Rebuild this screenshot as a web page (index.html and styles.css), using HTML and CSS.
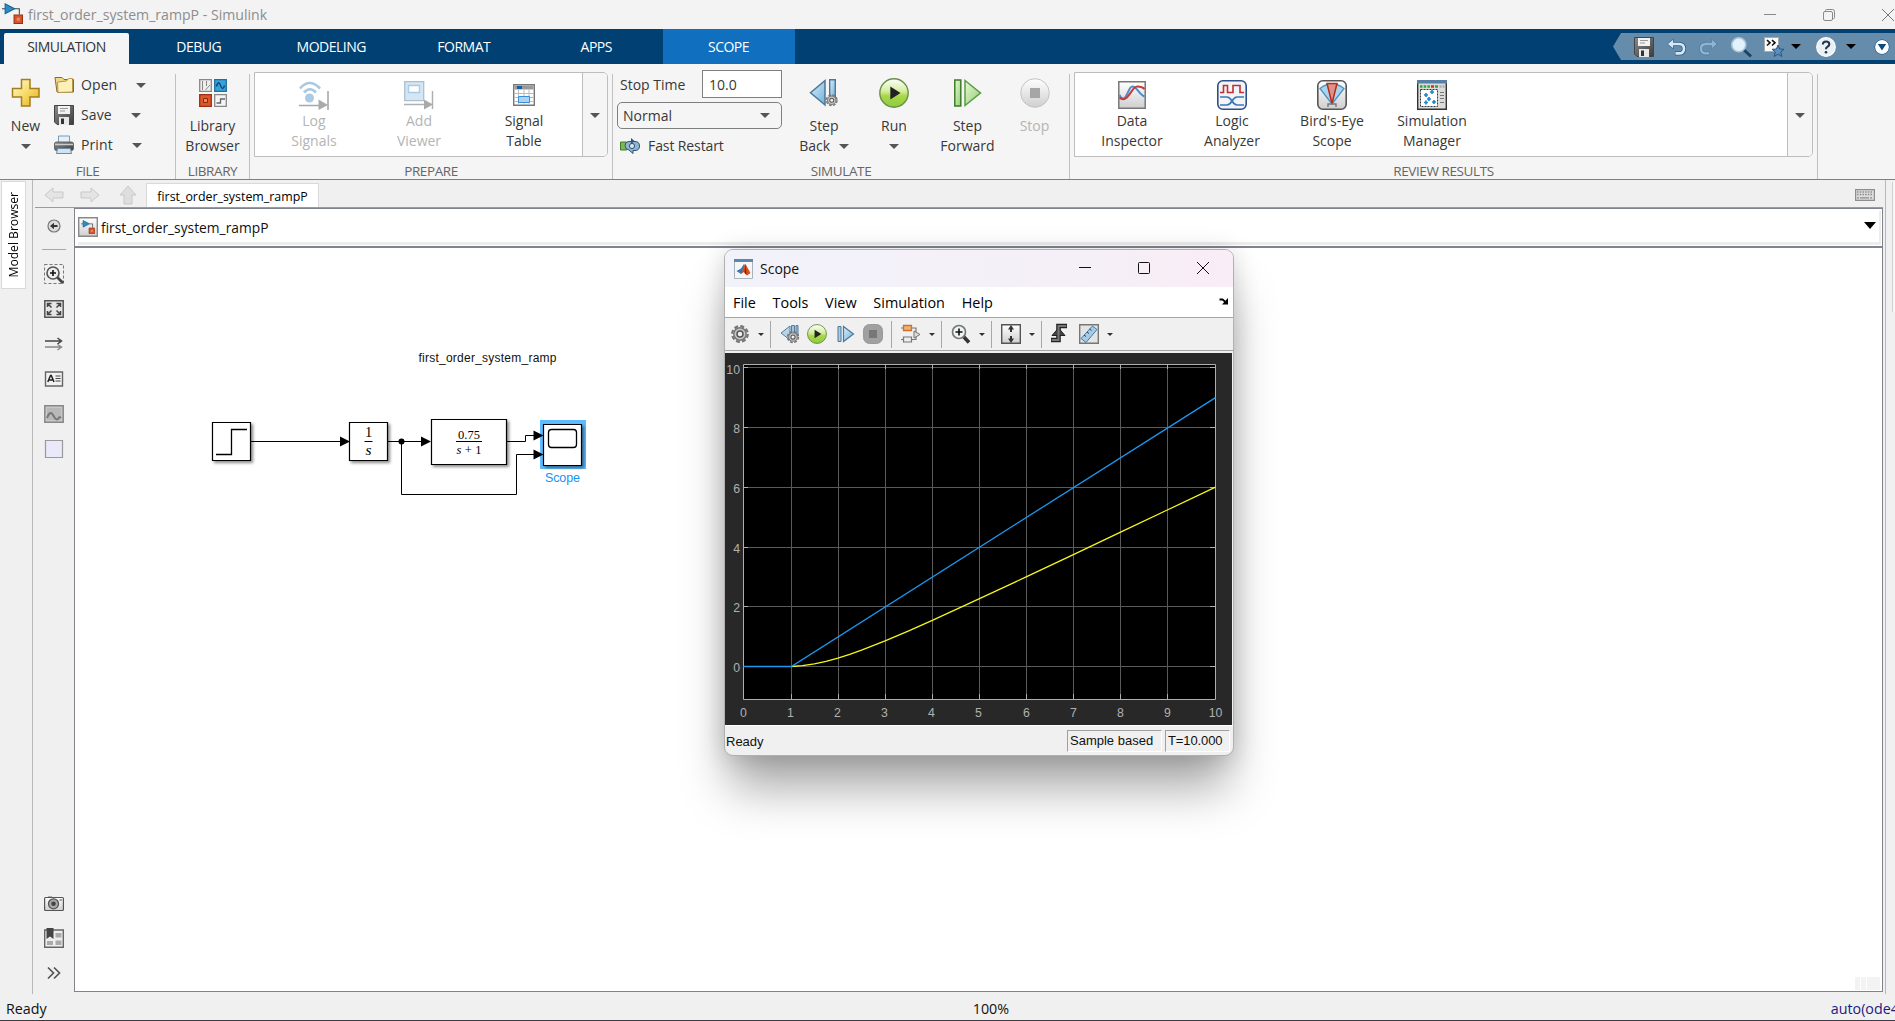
FILE: index.html
```html
<!DOCTYPE html>
<html lang="en">
<head>
<meta charset="utf-8">
<title>first_order_system_rampP - Simulink</title>
<link rel="stylesheet" href="styles.css">
</head>
<body>
<svg class="defs" width="0" height="0" aria-hidden="true">
  <defs>
    <linearGradient id="gGold" x1="0" y1="0" x2="1" y2="1"><stop offset="0" stop-color="#fffbd8"/><stop offset=".5" stop-color="#f7dc6a"/><stop offset="1" stop-color="#e3ae1c"/></linearGradient>
    <linearGradient id="gGreen" x1="0" y1="0" x2="0" y2="1"><stop offset="0" stop-color="#ffffff"/><stop offset=".45" stop-color="#d3ec9a"/><stop offset=".6" stop-color="#a8d84a"/><stop offset="1" stop-color="#8ecb3c"/></linearGradient>
    <linearGradient id="gGreenFlat" x1="0" y1="0" x2="1" y2="1"><stop offset="0" stop-color="#e8f8d8"/><stop offset="1" stop-color="#8fcf6c"/></linearGradient>
    <linearGradient id="gBlue" x1="0" y1="0" x2="1" y2="1"><stop offset="0" stop-color="#dceefa"/><stop offset="1" stop-color="#6fb0dc"/></linearGradient>
    <linearGradient id="gGrey" x1="0" y1="0" x2="0" y2="1"><stop offset="0" stop-color="#ffffff"/><stop offset="1" stop-color="#cfcfcf"/></linearGradient>
    <linearGradient id="gDark" x1="0" y1="0" x2="1" y2="1"><stop offset="0" stop-color="#8c8c8c"/><stop offset="1" stop-color="#3c3c3c"/></linearGradient>
    <symbol id="caret" viewBox="0 0 10 5"><path d="M0 0h10L5 5z" fill="currentColor"/></symbol>
    <symbol id="save" viewBox="0 0 20 20">
      <path d="M.5.5h19v19H3L.5 17z" fill="url(#gDark)" stroke="#444"/>
      <path d="M4 1h12v8H4z" fill="#f2f2f2"/><path d="M6 3.5h8M6 6h5" stroke="#999" stroke-width="1.2"/>
      <path d="M5 12h10v8H5z" fill="#e8e8e8"/><path d="M7 13.5h3V19H7z" fill="#333"/>
    </symbol>
    <symbol id="gear" viewBox="0 0 20 20">
      <circle cx="10" cy="10" r="7.800" fill="none" stroke="#777" stroke-width="2.200" stroke-dasharray="4 2.130"/>
      <circle cx="10" cy="10" r="6.200" fill="#c8c8c8" stroke="#777" stroke-width="1.500"/><circle cx="10" cy="10" r="3" fill="#f0f0f0" stroke="#555" stroke-width="1.500"/>
    </symbol>
    <symbol id="run" viewBox="0 0 30 30">
      <circle cx="15" cy="15" r="14.2" fill="url(#gGreen)" stroke="#6a8f4a" stroke-width="1.4"/>
      <path d="M11.3 8.5 21.5 15l-10.2 6.5z" fill="#222"/>
    </symbol>
    <symbol id="model" viewBox="0 0 20 20">
      <path d="M12 5.5h4.5V11" fill="none" stroke="#444"/>
      <path d="M0 5.5h3" stroke="#444"/>
      <path d="M3 .8v9.4l9-4.7z" fill="#2b8ccc" stroke="#1b5d8c"/>
      <path d="M11.5 11.500h8v8h-8z" fill="#d9532c" stroke="#99300f"/><path d="M14 14h3v3h-3z" fill="#e98a5c"/>
    </symbol>
  </defs>
</svg>

<header class="titlebar">
  <svg class="app-icon" width="21" height="21"><use href="#model"/></svg>
  <span class="title">first_order_system_rampP - Simulink</span>
  <div class="win-buttons">
    <svg width="12" height="12"><path d="M0 5.500h12" stroke="#888"/></svg>
    <svg width="12" height="12" fill="none" stroke="#888"><rect x=".5" y="2.5" width="9" height="9" rx="1.500"/><path d="M2.500 2.500V1.500q0-1 1-1h6q2 0 2 2v6q0 1-1 1h-1"/></svg>
    <svg width="12" height="12" stroke="#777"><path d="M0 0 12 12M12 0 0 12"/></svg>
  </div>
</header>

<nav class="tabs">
  <div class="tab active">SIMULATION</div>
  <div class="tab">DEBUG</div>
  <div class="tab">MODELING</div>
  <div class="tab">FORMAT</div>
  <div class="tab">APPS</div>
  <div class="tab context">SCOPE</div>
  <div class="quick">
    <svg width="20" height="20"><use href="#save"/></svg>
    <svg class="q-undo" width="19" height="16" fill="none"><path d="M4 5h8q5 0 5 4.700t-5 4.700H8" stroke="#2d5f8a" stroke-width="4.200"/><path d="M6.500 0 .300 5l6.200 5z" fill="#d4e8f7" stroke="#2d5f8a" stroke-width=".8"/><path d="M4 5h8q5 0 5 4.700t-5 4.700H8.500" stroke="#d4e8f7" stroke-width="2.600"/></svg>
    <svg class="q-redo" width="19" height="16" fill="none"><path d="M15 5H7q-5 0-5 4.700t5 4.700h3.500" stroke="#4d7fa8" stroke-width="4"/><path d="M12.500 0l5.700 5-5.700 5z" fill="#8fb4d2" stroke="#4d7fa8" stroke-width=".8"/><path d="M15 5H7q-5 0-5 4.700t5 4.700h3" stroke="#8fb4d2" stroke-width="2.400"/></svg>
    <svg class="q-find" width="21" height="20"><path d="m12 12 8 7.500" stroke="#1c4266" stroke-width="3"/><circle cx="7.800" cy="7.800" r="7" fill="#e3f1fb" stroke="#a9c4da" stroke-width="1.600"/></svg>
    <svg class="q-fav" width="20" height="20"><path d="M.5.500h14v14H.5z" fill="#fafafa" stroke="#aaa"/><path d="m3 3 3 2.800L3 8.500M8 3l3 2.800L8 8.500" fill="none" stroke="#111" stroke-width="1.600"/><path d="m14 8 1.700 4 4.300.3-3.300 2.700 1.100 4.500-3.800-2.400-3.800 2.400 1.100-4.500L8 12.300l4.300-.3z" fill="#5a8fc0" stroke="#24507c" stroke-width=".9"/></svg>
    <svg class="q-caret1" width="10" height="5"><use href="#caret"/></svg>
    <svg class="q-help" width="20" height="20"><circle cx="10" cy="10" r="9.300" fill="#e9f0f6" stroke="#fff" stroke-width="1.200"/><path d="M6.800 7.500q.2-3 3.300-3t3.200 2.700q0 1.500-1.700 2.500T10 12.300" fill="none" stroke="#24364a" stroke-width="2.100"/><circle cx="10" cy="15.200" r="1.300" fill="#24364a"/></svg>
    <svg class="q-caret2" width="10" height="5"><use href="#caret"/></svg>
    <svg class="q-more" width="16" height="16"><circle cx="8" cy="8" r="6" fill="#fff" stroke="#0d4a80" stroke-width="3"/><circle cx="8" cy="8" r="6.200" fill="#fff" stroke="#fff" stroke-width="1.400"/><path d="M3.800 5h8.400L8 11.500z" fill="#0d4a80"/></svg>
  </div>
</nav>

<div class="toolstrip">
  <section class="group file">
    <div class="group-body">
      <div class="big new"><div class="pic"><svg width="30" height="30"><path d="M10.500 1.500h8.500v9h9v8.500h-9v9h-8.500v-9h-9v-8.500h9z" fill="url(#gGold)" stroke="#a67c1c" stroke-width="1.500"/></svg></div><span>New</span><svg class="drop" width="10" height="5"><use href="#caret"/></svg></div>
      <div class="list">
        <div class="row"><svg width="20" height="20"><path d="M1 2.500h7l2 2h9.500V17H3z" fill="#f1d98a" stroke="#8a6a24"/><path d="m3.500 7 9-1 2-2.500h4V17L4 17.500z" fill="#fbf0b8" stroke="#a8832c" stroke-width=".8"/></svg><span>Open</span><svg width="10" height="5"><use href="#caret"/></svg></div>
        <div class="row"><svg width="20" height="20"><use href="#save"/></svg><span>Save</span><svg width="10" height="5"><use href="#caret"/></svg></div>
        <div class="row"><svg width="20" height="20"><path d="M4.500 1h11v7h-11z" fill="#e4f1fa" stroke="#7a9ab5"/><rect x=".5" y="7" width="19" height="8.500" rx="2" fill="url(#gDark)" stroke="#666"/><path d="M1 9.500h18" stroke="#ccc" stroke-width="1.500"/><path d="M3.500 13.500h13l1 5h-15z" fill="#cfe3f2" stroke="#6a8aa5"/></svg><span>Print</span><svg width="10" height="5"><use href="#caret"/></svg></div>
      </div>
    </div>
    <div class="group-label">FILE</div>
  </section>

  <section class="group library">
    <div class="group-body">
      <div class="big"><div class="pic"><svg width="28" height="28"><path d="M.7.700h11.600v11.600H.7z" fill="#eee" stroke="#888" stroke-width="1.300"/><path d="M3.500 2v9M6.500 11l4.500-5M7.500 2v5" fill="none" stroke="#888"/><path d="M15.700.700h11.600v11.600H15.700z" fill="#3aa0dc" stroke="#1f6fa0" stroke-width="1.300"/><path d="M17.500 7.500q1.800-7 4-1t4 0" fill="none" stroke="#0c4870" stroke-width="1.400"/><path d="M.7 15.700h11.600v11.600H.7z" fill="#e0562c" stroke="#9a3010" stroke-width="1.300"/><path d="M4.500 19.500h4v4h-4z" fill="#f08a5c" stroke="#8a2a0c"/><path d="M15.700 15.700h11.600v11.600H15.700z" fill="#f4f4f4" stroke="#888" stroke-width="1.300"/><path d="M17.500 24h4v-4h4.500" fill="none" stroke="#666" stroke-width="1.300"/></svg></div><span>Library<br>Browser</span></div>
    </div>
    <div class="group-label">LIBRARY</div>
  </section>

  <section class="group prepare">
    <div class="group-body">
      <div class="gallery">
        <div class="items">
          <div class="item off"><div class="pic"><svg width="30" height="29"><path d="M1 7.500q9.500-11 20 0M5 11.500q6-6.500 12 0" fill="none" stroke="#aac8df" stroke-width="2.600"/><circle cx="10.500" cy="17" r="4.500" fill="#a9cbe5"/><path d="M0 24.500h20M29 10v19" stroke="#a8a8a8" stroke-width="1.600"/><path d="M19.500 18.500 29 24l-9.500 5z" fill="#aaa"/></svg></div><span>Log<br>Signals</span></div>
          <div class="item off"><div class="pic"><svg width="30" height="29"><path d="M.7.700h19v19H.7z" fill="#d5e5f1" stroke="#aac0d2" stroke-width="1.300"/><path d="M4.500 4.500h11v7h-11z" fill="#fff" stroke="#a4cdec" stroke-width="1.400"/><path d="M0 23.500h20M28.500 10v18" stroke="#b0b0b0" stroke-width="1.500"/><path d="M20 18.500 29 23.500l-9 5z" fill="#aaa"/></svg></div><span>Add<br>Viewer</span></div>
          <div class="item"><div class="pic"><svg width="22" height="22"><path d="M.7.700h20.600v20.600H.7z" fill="#fff" stroke="#777" stroke-width="1.400"/><path d="M1.500 1.500h19v4h-19z" fill="#999"/><path d="M4 2h5v3H4z" fill="#1560a8"/><path d="M1 9.500h20M1 13.500h20M1 17.500h20M5.500 6v15M11 6v15M16 6v15" stroke="#bbb" stroke-width="1"/><path d="M5.500 12.500h11v6h-11z" fill="#a8d4f8" stroke="#3c8cd8"/></svg></div><span>Signal<br>Table</span></div>
        </div>
        <div class="more"><svg width="10" height="5"><use href="#caret"/></svg></div>
      </div>
    </div>
    <div class="group-label">PREPARE</div>
  </section>

  <section class="group simulate">
    <div class="group-body">
      <div class="sim-form">
        <div class="stop-time"><span>Stop Time</span><div class="field">10.0</div></div>
        <div class="select"><span>Normal</span><svg width="10" height="5"><use href="#caret"/></svg></div>
        <div class="restart"><svg width="20" height="16"><path d="M.5 4h6v8h-6z" fill="#7cb84c" stroke="#47782a"/><path d="M11 3.500h4q4.500 0 4.500 4.500t-4.500 4.500h-2v3l-4-3.500q-4-.5-4-4.500t4-4z" fill="#90b4d2" stroke="#2f5474"/><path d="m11 0 3.500 3L11 6z" fill="#2f5474"/><circle cx="12" cy="8" r="2.600" fill="#d2e4f2" stroke="#2f5474"/></svg><span>Fast Restart</span></div>
      </div>
      <div class="big step-back"><div class="pic"><svg width="30" height="28"><path d="M16 1.500V26L1.500 13.800z" fill="url(#gBlue)" stroke="#4d7797" stroke-width="1.500"/><path d="M20.700.700h5.600v18h-5.600z" fill="url(#gBlue)" stroke="#4d7797" stroke-width="1.400"/><use href="#gear" x="16" y="14.500" width="13.500" height="13.500"/></svg></div><span>Step<br>Back <svg class="inline-caret" width="10" height="5"><use href="#caret"/></svg></span></div>
      <div class="big run"><div class="pic"><svg width="30" height="30"><use href="#run"/></svg></div><span>Run</span><svg class="drop" width="10" height="5"><use href="#caret"/></svg></div>
      <div class="big step-fwd"><div class="pic"><svg width="28" height="28"><path d="M.8 1h6v26h-6z" fill="url(#gGreenFlat)" stroke="#3f7a2a" stroke-width="1.500"/><path d="M11 1.500V26.500l15.500-12.500z" fill="url(#gGreenFlat)" stroke="#5c9a44" stroke-width="1.500"/></svg></div><span>Step<br>Forward</span></div>
      <div class="big stop off"><div class="pic"><svg width="30" height="30"><circle cx="15" cy="15" r="14.300" fill="url(#gGrey)" stroke="#c4c4c4"/><path d="M10 10h10v10H10z" fill="#a6a6a6"/></svg></div><span>Stop</span></div>
    </div>
    <div class="group-label">SIMULATE</div>
  </section>

  <section class="group review">
    <div class="group-body">
      <div class="gallery">
        <div class="items">
          <div class="item"><div class="pic"><svg width="28" height="28"><path d="M.8.800h26.400v26.400H.8z" fill="url(#gGrey)" stroke="#777" stroke-width="1.500"/><path d="M1.500 14q2 4 4 3.500c4-1 5-12 9-12s7 8 12 10" fill="none" stroke="#4c8ccc" stroke-width="2"/><path d="M1.500 16.500q3 3 6 1c5-3 7-12 12-12q4.500 0 7 2.500" fill="none" stroke="#c83a3a" stroke-width="2"/></svg></div><span>Data<br>Inspector</span></div>
          <div class="item"><div class="pic"><svg width="30" height="30"><rect x=".8" y=".800" width="28.400" height="28.400" rx="5" fill="#f2f4f8" stroke="#2d4f88" stroke-width="1.600"/><path d="M3 12.500h3.500v-7h4v7h5.500v-7h7v7h4" fill="none" stroke="#c03030" stroke-width="1.600"/><path d="M3 17h7c5 0 5 8 10 8h7M3 25h7c5 0 5-8 10-8h7" fill="none" stroke="#3978b8" stroke-width="1.700"/></svg></div><span>Logic<br>Analyzer</span></div>
          <div class="item"><div class="pic"><svg width="30" height="30"><rect x=".8" y=".800" width="28.400" height="28.400" rx="5" fill="url(#gGrey)" stroke="#555" stroke-width="1.600"/><path d="M15 24 3 8.500Q15-1 27 8.500z" fill="#a8d4f0" stroke="#4c94c4" stroke-width="1.300"/><path d="M15 23.500 10 3.500h10z" fill="#dc9488" stroke="#b82c20" stroke-width="1.500"/><path d="M11 27v-3h8v3" fill="none" stroke="#777" stroke-width="1.400"/></svg></div><span>Bird's-Eye<br>Scope</span></div>
          <div class="item"><div class="pic"><svg width="30" height="30"><path d="M.7.700h28.600v28.600H.7z" fill="#dcdcdc" stroke="#333" stroke-width="1.400"/><path d="M0 0h30v3.500H0z" fill="#557fa4"/><path d="M3 6.500h10" stroke="#1fae3c" stroke-width="2.400" stroke-dasharray="2.500 1.200"/><path d="M14 6.500h3" stroke="#e02818" stroke-width="2.400"/><path d="M18 6.500h3" stroke="#1fae3c" stroke-width="2.400"/><path d="M22.500 6.500h5" stroke="#aaa" stroke-width="2.400" stroke-dasharray="2 1"/><path d="M3.500 9.500h17v17h-17z" fill="#fff" stroke="#333" stroke-dasharray="2 1"/><path d="M13 12h4M15 10v4M7 15h4M9 13v4M10 19h4M12 17v4M7 22.500h4M9 20.500v4M15 22h4M17 20v4" stroke="#2288cc" stroke-width="1.700"/><path d="M23 12.500h4M23 15.500h4M23 18.500h4M23 22.500h4" stroke="#777"/></svg></div><span>Simulation<br>Manager</span></div>
        </div>
        <div class="more"><svg width="10" height="5"><use href="#caret"/></svg></div>
      </div>
    </div>
    <div class="group-label">REVIEW RESULTS</div>
  </section>
</div>

<main class="workspace">
  <aside class="left-dock"><div class="dock-tab"><span>Model Browser</span></div></aside>
  <div class="editor">
    <div class="doc-bar">
      <svg class="nav-back" width="20" height="16"><path d="M1 8l8-7v4h10v6H9v4z" fill="#e4e4e4" stroke="#c9c9c9"/></svg>
      <svg class="nav-fwd" width="20" height="16"><path d="M19 8l-8-7v4H1v6h10v4z" fill="#e4e4e4" stroke="#c9c9c9"/></svg>
      <svg class="nav-up" width="18" height="20"><path d="M9 1l8 9h-4v9H5v-9H1z" fill="#dedede" stroke="#c9c9c9"/></svg>
      <div class="doc-tab">first_order_system_rampP</div>
      <svg class="keyboard" width="20" height="12"><path d="M.6.600h18.800v10.800H.6z" fill="#ddd" stroke="#8d8d8d" stroke-width="1.200"/><path d="M2 3h16M2 5.500h16" stroke="#8d8d8d" stroke-width="1.400" stroke-dasharray="1.500 1.200"/><path d="M2 8.800h16" stroke="#8d8d8d" stroke-width="1.300" stroke-dasharray="2 1 9 1"/></svg>
    </div>
    <div class="edit-row">
      <div class="palette">
        <svg class="p-hide" width="16" height="16"><circle cx="8" cy="8" r="6" fill="#ddd" stroke="#777" stroke-width="1.200"/><path d="M4 8 8 4.800V7h3.500v2H8v2.200z" fill="#333"/></svg>
        <div class="p-sep"></div>
        <svg width="20" height="20"><path d="M.5.500h19v19H.5z" fill="none" stroke="#777" stroke-dasharray="3 2"/><path d="m13 13 6 6" stroke="#444" stroke-width="2.600"/><circle cx="9" cy="9" r="6" fill="#eee" stroke="#555" stroke-width="1.600"/><path d="M6 9h6M9 6v6" stroke="#111" stroke-width="1.600"/></svg>
        <svg width="20" height="20"><path d="M.8 1.800h18.400v16.400H.8z" fill="#e6e6e6" stroke="#555" stroke-width="1.500"/><path d="M3.500 8V4.500h4M3.500 4.500l4 4M16.500 8V4.500h-4M16.500 4.500l-4 4M3.500 12v3.500h4M3.500 15.500l4-4M16.500 12v3.500h-4M16.500 15.500l-4-4" fill="none" stroke="#444" stroke-width="1.500"/></svg>
        <svg width="20" height="20"><path d="M1 7h15M13.500 4l4 3-4 3" fill="none" stroke="#444" stroke-width="1.500"/><path d="M1 13h15M13.500 10.500l4 2.500-4 3" fill="none" stroke="#888" stroke-width="1.400"/></svg>
        <svg width="20" height="20"><path d="M1.500 3h17v14h-17z" fill="#f2f2f2" stroke="#666" stroke-width="1.400"/><path d="m3.800 13 2.700-6.500h.8L10 13M4.800 11h4" fill="none" stroke="#222" stroke-width="1.500"/><path d="M11.500 7h5M11.500 9.500h5M11.500 12h5" stroke="#444"/></svg>
        <svg width="20" height="20"><path d="M.8 1.800h18.400v16.400H.8z" fill="#c8c8c8" stroke="#888" stroke-width="1.500"/><path d="M3 4h14v12H3z" fill="#b8b8b8"/><path d="M3 14q3-8 6-3 3 6 5 4 1.500-3 3-1" fill="none" stroke="#777" stroke-width="2"/></svg>
        <svg width="20" height="20"><path d="M1.500 1.500h17v17h-17z" fill="#e9e9fa" stroke="#999" stroke-width="1.200"/></svg>
        <div class="p-space"></div>
        <svg width="20" height="20"><path d="M4 3.500h4v2H4z" fill="#666"/><rect x=".6" y="4.500" width="18.800" height="13" rx="1" fill="url(#gGrey)" stroke="#555" stroke-width="1.200"/><circle cx="9.500" cy="10.800" r="5" fill="#aaa" stroke="#555" stroke-width="1.300"/><circle cx="9.500" cy="10.800" r="2.300" fill="#444"/><path d="M15.500 7h2.500" stroke="#888" stroke-width="1.500"/></svg>
        <svg width="20" height="20"><path d="M.7 2h18.600v17.300H.7z" fill="#eee" stroke="#666" stroke-width="1.400"/><path d="M3 13h6v4H3zM11.500 5h6v4.500h-6zM11.500 12.500h6V17h-6z" fill="#aaa"/><path d="M2.500 0h7v11L6 8.500 2.500 11z" fill="#444"/></svg>
        <svg width="20" height="20"><path d="m4 4.500 5.500 5.500L4 15.500M10 4.500l5.500 5.500-5.500 5.500" fill="none" stroke="#555" stroke-width="1.700"/></svg>
      </div>
      <div class="canvas-frame">
        <div class="crumbs">
          <div class="crumb-inner">
            <svg width="20" height="20"><path d="M.7.700h18.600v18.600H.7z" fill="url(#gGrey)" stroke="#888" stroke-width="1.400"/><use href="#model" x="3" y="3" width="14" height="14"/></svg>
            <span>first_order_system_rampP</span>
            <svg class="crumb-caret" width="12" height="7"><path d="M0 0h12L6 7z"/></svg>
          </div>
        </div>
        <div class="canvas">
          <svg class="diagram" width="600" height="300" viewBox="75 248 600 300">
            <defs><filter id="sh" x="-20%" y="-20%" width="150%" height="150%"><feDropShadow dx="2" dy="2" stdDeviation="1.500" flood-color="#000" flood-opacity=".45"/></filter></defs>
            <text class="note" x="418.500" y="362" textLength="138">first_order_system_ramp</text>
            <g class="wires">
              <path d="M251 441.500h90M388 441.500h36M401.500 441.500v53h115v-40h20M507 441.500h18.500v-6h11"/>
            </g>
            <path d="M540 420h46v49h-46z" fill="#5ebbff"/>
            <path d="M340 436.500l10 5-10 5zM421 436.500l10 5-10 5zM533.500 430.500l10 5-10 5zM533.500 449.500l10 5-10 5z"/>
            <circle cx="401.500" cy="441.500" r="3"/>
            <g class="blocks" filter="url(#sh)">
              <path d="M212.500 422.500h38v38h-38z"/>
              <path d="M349.500 422.500h38v38h-38z"/>
              <path d="M431.500 419.500h75v45h-75z"/>
              <path d="M543.500 424.500h38v41h-38z"/>
            </g>
            <path class="glyph" d="M216 454.500h15.500v-25h15.500"/>
            <rect class="glyph" x="548.500" y="429.500" width="28" height="18" rx="3"/>
            <g class="math">
              <text x="368.500" y="437" font-size="14.500">1</text><text x="368.500" y="455" font-size="15.500" font-style="italic">s</text>
              <text x="469" y="438.500" textLength="22">0.75</text>
              <text x="469" y="453.500" textLength="25"><tspan font-style="italic">s</tspan> + 1</text>
            </g>
            <path class="frac" d="M364.500 441.500h8M456 441.500h26"/>
            <text class="port-label" x="562.500" y="482.200" textLength="35">Scope</text>
          </svg>
          <div class="ghost"><i></i><i></i><i class="wide"></i></div>
        </div>
      </div>
    </div>
  </div>
  <aside class="right-dock"></aside>
</main>

<footer class="status"><span>Ready</span><span class="zoom-level">100%</span><span class="solver">auto(ode4</span></footer>

<div class="scope">
  <div class="scope-title">
    <svg width="19" height="20"><path d="M.5.500h18v19H.5z" fill="#f4f6f8" stroke="#a9b2ba"/><path d="M0 0h19v3H0z" fill="#5a87ae"/><path d="M2.500 12 7 9.500 10 5l2 4-5 6z" fill="#3478b4"/><path d="M7 15l3-2 3 3.500L16.500 14 11.500 5q-1 0-2.500 5z" fill="#d8501c"/><path d="M11.500 5l-1 9 2 2z" fill="#8c1c10"/></svg>
    <span>Scope</span>
    <div class="scope-buttons">
      <svg width="12" height="12"><path d="M0 5.500h12" stroke="#111"/></svg>
      <svg width="12" height="12"><rect x=".5" y=".500" width="11" height="11" rx="1" fill="none" stroke="#111"/></svg>
      <svg width="12" height="12"><path d="M0 0 12 12M12 0 0 12" stroke="#111"/></svg>
    </div>
  </div>
  <div class="scope-menu"><span>File</span><span>Tools</span><span>View</span><span>Simulation</span><span>Help</span><svg width="9" height="8"><path d="M.5 2.500h3l3 2.500" fill="none" stroke="#000" stroke-width="1.800"/><path d="M9 1v6.500H3z"/></svg></div>
  <div class="scope-tools">
    <svg class="t1" width="20" height="20"><use href="#gear"/></svg>
    <svg class="c" width="6" height="3"><use href="#caret"/></svg>
    <i></i>
    <svg class="t2" width="20" height="20"><path d="M10 2v14L1 9z" fill="#b8d4ea" stroke="#587c98"/><path d="M11.500 1.500h3v10h-3zM16 1.500h2v10h-2z" fill="#9cc4e4" stroke="#587c98"/><use href="#gear" x="6" y="6" width="14" height="14"/></svg>
    <svg class="t3" width="20" height="20"><use href="#run"/></svg>
    <svg class="t4" width="18" height="18"><path d="M1 1.500h3v15H1z" fill="#a8cce8" stroke="#4c7898"/><path d="M6.500 1.500v15l10-7.500z" fill="url(#gBlue)" stroke="#4c7898" stroke-width="1.200"/></svg>
    <svg class="t5" width="20" height="20"><rect x=".5" y=".500" width="19" height="19" rx="6" fill="#a0a0a0" stroke="#999"/><path d="M6 6h8v8H6z" fill="#777"/></svg>
    <i></i>
    <svg class="t6" width="20" height="20"><path d="M0 4h3M11 4h4v4M0 15.500h3M11 15.500h4V12" fill="none" stroke="#777" stroke-width="1.200"/><path d="M2.500 1.500h8v5h-8z" fill="#f4b070" stroke="#d0702c" stroke-width="1.300"/><path d="M2.500 13h8v5h-8z" fill="#eee" stroke="#777" stroke-width="1.200"/><path d="M13 7l6 3.500-6 3.500z" fill="#ddd" stroke="#777"/></svg>
    <svg class="c" width="6" height="3"><use href="#caret"/></svg>
    <i></i>
    <svg class="t7" width="20" height="20"><path d="m12 12 6 6.500" stroke="#333" stroke-width="3.600"/><circle cx="8" cy="8" r="6.500" fill="#eef3f6" stroke="#777" stroke-width="1.700"/><path d="M4.500 8h7M8 4.500v7" stroke="#111" stroke-width="1.600"/></svg>
    <svg class="c" width="6" height="3"><use href="#caret"/></svg>
    <i></i>
    <svg class="t8" width="20" height="20"><path d="M.7.700h18.600v18.600H.7z" fill="url(#gGrey)" stroke="#555" stroke-width="1.400"/><path d="M10 1l3 4.500h-2V8H9V5.500H7zM10 19l3-4.500h-2V12H9v2.500H7z" fill="#333"/></svg>
    <svg class="c" width="6" height="3"><use href="#caret"/></svg>
    <i></i>
    <svg class="t9" width="18" height="20"><path d="M17 2H8.500v14H1" fill="none" stroke="#222" stroke-width="4.600"/><path d="M8.500 4 15 11.500H2z" fill="#444" stroke="#222"/><path d="M16.300 2H8.500v14H1.700" fill="none" stroke="#777" stroke-width="2"/></svg>
    <svg class="t10" width="20" height="20"><path d="M.7.700h18.600v18.600H.7z" fill="#e4e4e4" stroke="#777" stroke-width="1.400"/><path d="M2 14.500 13.500 2 18 5.500 7 18.500z" fill="#a4cce8" stroke="#4c7c9c"/><path d="m5 11 2 1.500M8 8l2 1.500M10.500 5l2 1.500" stroke="#1c4868"/></svg>
    <svg class="c" width="6" height="3"><use href="#caret"/></svg>
  </div>
  <svg class="plot" width="508" height="373" viewBox="725 352 508 373">
    <path d="M725 353h507v372H725z" fill="#282828"/>
    <path d="M743.500 364.500h472v335h-472z" fill="#000"/>
    <path class="grid" d="M791.500 364v335M838.500 364v335M885.500 364v335M932.500 364v335M979.500 364v335M1026.500 364v335M1073.500 364v335M1120.500 364v335M1167.500 364v335M743 367.500h472M743 427.500h472M743 487.500h472M743 547.500h472M743 606.500h472M743 666.500h472"/>
    <path class="ticks" d="M791.500 364v5M838.500 364v5M885.500 364v5M932.500 364v5M979.500 364v5M1026.500 364v5M1073.500 364v5M1120.500 364v5M1167.500 364v5M791.500 699v-5M838.500 699v-5M885.500 699v-5M932.500 699v-5M979.500 699v-5M1026.500 699v-5M1073.500 699v-5M1120.500 699v-5M1167.500 699v-5M743 367.500h5M743 427.500h5M743 487.500h5M743 547.500h5M743 606.500h5M1215 367.500h-5M1215 427.500h-5M1215 487.500h-5M1215 547.500h-5M1215 606.500h-5M1215 666.500h-5M743.500 364.500h472v335h-472z"/>
    <polyline fill="none" stroke="#f6f61c" stroke-width="1.300" points="791.500,666.500 802.500,665.700 814.300,663.900 826.100,661.300 837.900,658.100 849.700,654.300 861.500,650.100 885.100,640.900 908.700,630.900 932.300,620.400 979.500,598.700 1026.700,576.600 1073.900,554.300 1121.100,531.900 1168.300,509.500 1215.500,487.100"/>
    <polyline fill="none" stroke="#1c96ee" stroke-width="1.300" points="743.500,666.500 791.300,666.500 1215.500,397.600"/>
    <g class="ylab"><text x="740" y="373.800">10</text><text x="740" y="432.500">8</text><text x="740" y="492.500">6</text><text x="740" y="552.500">4</text><text x="740" y="612">2</text><text x="740" y="671.800">0</text></g>
    <g class="xlab"><text x="743.500" y="717">0</text><text x="790.500" y="717">1</text><text x="837.500" y="717">2</text><text x="884.500" y="717">3</text><text x="931.500" y="717">4</text><text x="978.500" y="717">5</text><text x="1026.500" y="717">6</text><text x="1073.500" y="717">7</text><text x="1120.500" y="717">8</text><text x="1167.500" y="717">9</text><text x="1215.500" y="717">10</text></g>
  </svg>
  <div class="scope-status"><span>Ready</span><div class="cell sample">Sample based</div><div class="cell time">T=10.000</div></div>
</div>
</body>
</html>
```
FILE: styles.css
```css
* { box-sizing: border-box; }
html, body { height: 100%; }
body {
  margin: 0;
  width: 1895px;
  height: 1021px;
  overflow: hidden;
  display: flex;
  flex-direction: column;
  background: #f0f0f0;
  color: #2b2b2b;
  font: 14px/20px "Open Sans", "Noto Sans", sans-serif;
  white-space: nowrap;
}
svg { display: block; flex: none; overflow: visible; }
.defs { position: absolute; }

/* Title bar */
.titlebar { height: 29px; flex: none; display: flex; align-items: center; background: #f3f3f3; padding-left: 2px; }
.app-icon { margin-top: -2px; }
.title { margin-left: 5px; color: #8d8d8d; font-size: 14.100px; }
.win-buttons { margin-left: auto; display: flex; gap: 47px; padding-right: 1px; }

/* Ribbon tabs */
.tabs { height: 35px; flex: none; display: flex; background: #004073; }
.tab { width: 132.500px; padding-top: 8px; text-align: center; color: #fff; letter-spacing: -.5px; }
.tab.active { width: 125px; margin: 4px 3.500px 0 4px; padding-top: 4px; background: #f5f5f5; color: #333; border-radius: 2px 2px 0 0; }
.tab.context { background: #1070bf; width: 132px; }
.quick {
  margin: 4px 0 0 auto;
  width: 282px;
  height: 27px;
  display: flex;
  align-items: center;
  padding-left: 21px;
  background: #668cab;
  clip-path: polygon(8px 0, 100% 0, 100% 100%, 8px 100%, 0 50%);
}
.quick svg { color: #000; }
.q-undo { margin-left: 13px; }
.q-redo { margin-left: 13px; }
.q-find { margin-left: 13px; }
.q-fav { margin-left: 12px; }
.q-caret1 { margin-left: 7px; }
.q-help { margin-left: 15px; }
.q-caret2 { margin-left: 10px; }
.q-more { margin-left: 18px; }

/* Toolstrip */
.toolstrip { height: 116px; flex: none; display: flex; background: #f5f5f5; border-bottom: 1px solid #808080; color: #383838; }
.toolstrip svg { color: #555; }
.group { margin-top: 10px; height: 105px; border-right: 1px solid #c0c0c0; }
.group-body { height: 89px; display: flex; align-items: flex-start; }
.group-label { line-height: 16px; text-align: center; color: #666; font-size: 13.500px; letter-spacing: -.4px; }
.file { width: 176px; }
.library { width: 74px; }
.prepare { width: 363px; }
.simulate { width: 457px; }
.review { width: 748px; }

.big { padding-top: 3px; display: flex; flex-direction: column; align-items: center; text-align: center; }
.pic { height: 32px; display: flex; align-items: center; justify-content: center; }
.big span { margin-top: 7px; }
.drop { margin-top: 8px; }
.new { width: 51px; }
.library .big { width: 73px; }
.list { margin-left: 3px; display: flex; flex-direction: column; gap: 8px; }
.row { height: 22px; display: flex; align-items: center; }
.row span { margin: 0 19px 0 7px; letter-spacing: .1px; }
.off { color: #b4b4b4; }

.gallery { margin: -2px 0 0 4px; height: 85px; display: flex; background: #fff; border: 1px solid #bdbdbd; border-radius: 0 5px 5px 0; overflow: hidden; }
.prepare .gallery { width: 354px; }
.review .gallery { width: 739px; }
.items { flex: 1; display: flex; padding-left: 6.500px; }
.item { width: 105px; padding-top: 6px; display: flex; flex-direction: column; align-items: center; text-align: center; }
.review .item { width: 100px; }
.review .items { padding-left: 7px; }
.more { width: 25px; display: grid; place-items: center; background: #f5f5f5; border-left: 1px solid #bdbdbd; padding-top: 2px; }

.sim-form { width: 165px; margin: -4px 0 0 4px; }
.stop-time { height: 28px; display: flex; align-items: center; justify-content: space-between; padding-left: 3px; }
.stop-time span { margin-top: 2px; }
.field { width: 80px; height: 28px; padding: 4px 6px 0; background: #fff; border: 1px solid #7f7f7f; }
.select { margin-top: 4px; height: 27px; display: flex; align-items: center; justify-content: space-between; padding: 0 11px 0 5px; border: 1px solid #7f7f7f; border-radius: 5px; }
.restart { margin-top: 7px; height: 20px; display: flex; align-items: center; gap: 8px; padding-left: 3px; letter-spacing: -.1px; }
.step-back { width: 70px; margin-left: 7px; }
.run { width: 70px; }
.step-fwd { width: 77px; }
.stop { width: 57px; }
.inline-caret { display: inline-block; vertical-align: 2px; margin-left: 5px; }

/* Workspace */
.workspace { flex: 1; min-height: 0; display: flex; }
.left-dock { width: 33px; height: 814px; border-right: 1px solid #b8b8b8; padding: 1px 0 0 1px; }
.dock-tab { width: 25px; height: 108px; background: #fff; border: 1px solid #d9d9d9; display: flex; align-items: center; justify-content: center; }
.dock-tab span { writing-mode: vertical-rl; transform: rotate(180deg); font-size: 12.100px; color: #000; }
.editor { width: 1850px; padding-left: 2px; display: flex; flex-direction: column; height: 812px; }
.doc-bar { height: 28px; flex: none; display: flex; align-items: center; padding: 3px 8px 0 9px; border-bottom: 1px solid #9b9b9b; }
.nav-fwd { margin-left: 16px; }
.nav-up { margin-left: 19px; }
.doc-tab { align-self: flex-end; margin: 0 auto 0 9px; width: 173px; height: 24px; line-height: 26px; background: #fff; border: 1px solid #d9d9d9; border-bottom: 0; text-align: center; font-size: 12.400px; color: #000; }
.edit-row { flex: 1; min-height: 0; display: flex; }
.palette { width: 39px; padding: 0 2px 9px 0; display: flex; flex-direction: column; align-items: center; gap: 15px; }
.p-hide { margin-top: 10px; }
.p-sep { width: 24px; height: 1px; background: #a8a8a8; margin-bottom: -1px; }
.p-space { flex: 1; }
.canvas-frame { flex: 1; display: flex; flex-direction: column; border: 1px solid #80838d; border-top: 0; background: #fff; }
.crumbs { height: 40px; padding: 2px 1px 3px 3px; border: solid #7f8490; border-width: 1px 0 2px; }
.crumb-inner { height: 34px; display: flex; align-items: center; border-bottom: 3px solid #ededed; border-right: 2px solid #ededed; padding: 0 3px 0 0; color: #111; font-size: 13.800px; }
.crumb-inner span { margin: 2px 0 0 3px; }
.crumb-caret { margin: -2px 0 0 auto; }
.canvas { flex: 1; display: flex; justify-content: space-between; align-items: flex-start; }
.ghost { align-self: flex-end; display: flex; gap: 1px; padding: 0 2px 1px; }
.ghost i { width: 5px; height: 13px; background: #f3f3f3; }
.ghost .wide { width: 13px; }
.right-dock { flex: 1; margin-left: 2px; height: 814px; border-left: 1px solid #b8b8b8; display: flex; justify-content: flex-end; }
.right-dock::after { content: ""; width: 2px; height: 130px; margin-top: 2px; background: #f7f7f7; border-left: 1px solid #d0d0d0; }

/* Block diagram */
.wires { fill: none; stroke: #000; stroke-width: 1; }
.blocks { fill: #fff; stroke: #000; stroke-width: 1.200; }
.glyph { fill: none; stroke: #000; stroke-width: 1.300; }
.frac { stroke: #000; stroke-width: 1; }
.note { font: 12px "Liberation Sans", sans-serif; fill: #111; }
.math { font: 12.500px "Liberation Serif", serif; text-anchor: middle; }
.port-label { font: 12.500px "Liberation Sans", sans-serif; fill: #1493f5; text-anchor: middle; }

/* Status bar */
.status { height: 29px; flex: none; display: flex; line-height: 20px; padding: 7px 0 0 6px; border-bottom: 1px solid #3c3c44; color: #111; font-size: 14.300px; overflow: hidden; }
.status span { flex: none; }
.zoom-level { margin-left: 926px; width: 858px; }
.solver { color: #1a1a80; }

/* Scope window */
.scope {
  position: absolute;
  left: 724px;
  top: 249px;
  width: 510px;
  height: 507px;
  border: 1px solid #b0b0b0;
  border-radius: 9px;
  overflow: hidden;
  display: flex;
  flex-direction: column;
  background: #f0f0f0;
  color: #111;
  box-shadow: 0 38px 48px -6px rgba(0, 0, 0, .34), 0 2px 24px rgba(0, 0, 0, .17);
}
.scope-title { height: 37px; flex: none; display: flex; align-items: center; padding-left: 9px; background: linear-gradient(90deg, #f2f2fa 0, #f4f0f8 60%, #f9edf6 100%); }
.scope-title span { margin-left: 7px; }
.scope-buttons { margin: -1px 24px 0 auto; display: flex; gap: 47px; }
.scope-menu { height: 31px; flex: none; display: flex; align-items: center; padding: 1px 0 0 8px; background: #fff; border-bottom: 1px solid #a5a5a5; color: #000; font-size: 14.400px; }
.scope-menu span + span { margin-left: 16.800px; }
.scope-menu svg { margin: -4px 5px 0 auto; }
.scope-tools { height: 33px; flex: none; display: flex; align-items: center; padding-left: 5px; background: #f0f0f0; border-bottom: 1px solid #a5a5a5; }
.scope-tools i { width: 1px; height: 27px; background: #a8a8a8; }
.scope-tools .c { margin: 0 6px 0 8px; color: #333; }
.t2 { margin-left: 9px; }
.t3 { margin-left: 7px; }
.t4 { margin-left: 10px; }
.t5 { margin: 0 8px 0 8px; }
.t6, .t7, .t8 { margin-left: 9px; }
.t9 { margin-left: 8px; }
.t10 { margin-left: 11px; }
.plot { margin-top: 1px; }
.plot text { font: 12.300px "Liberation Sans", sans-serif; fill: #b0b0b0; }
.grid { fill: none; stroke: #5a5a5a; }
.ticks { fill: none; stroke: #afafaf; }
.ylab { text-anchor: end; }
.xlab { text-anchor: middle; }
.scope-status { flex: 1; display: flex; align-items: center; padding: 1px 3px 0 1px; border-top: 1px solid #fff; font: 13px "Liberation Sans", sans-serif; }
.cell { height: 22px; line-height: 20px; padding-left: 2px; border: 1px solid; border-color: #a0a0a0 #fff #fff #a0a0a0; }
.sample { width: 95px; margin-left: auto; }
.time { width: 65px; margin-left: 3px; letter-spacing: -.1px; }
```
